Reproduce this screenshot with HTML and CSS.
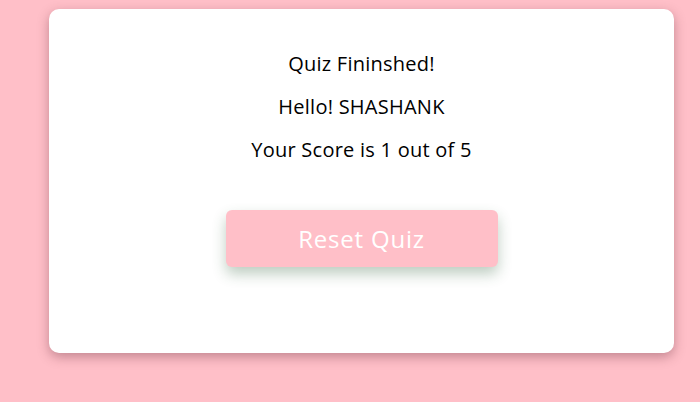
FILE: index.html
```html
<!DOCTYPE html>
<html>
<head>
<meta charset="utf-8">
<link rel="stylesheet" href="styles.css">
</head>
<body>
<div class="card">
  <p class="line">Quiz Fininshed!</p>
  <p class="line">Hello! SHASHANK</p>
  <p class="line">Your Score is 1 out of 5</p>
  <button class="reset">Reset Quiz</button>
</div>
</body>
</html>
```
FILE: styles.css
```css
html, body {
  margin: 0;
  padding: 0;
}
body {
  background: #ffbfc8;
  font-family: "Open Sans", "Noto Sans", sans-serif;
  padding-top: 9px;
  height: 402px;
  box-sizing: border-box;
}
.card {
  margin-left: 49px;
  width: 625px;
  height: 344px;
  background: #fff;
  border-radius: 10px;
  box-shadow: 0 4px 12px rgba(80, 30, 40, 0.35);
  box-sizing: border-box;
  padding-top: 40px;
  display: flex;
  flex-direction: column;
  align-items: center;
}
.line {
  margin: 0 0 13px 0;
  font-size: 20px;
  line-height: 30px;
  letter-spacing: 0.25px;
  color: #000;
}
.reset {
  margin-top: 32px;
  width: 272px;
  height: 57px;
  border: none;
  border-radius: 6px;
  background: #ffbfc8;
  color: #fff;
  font-family: inherit;
  font-size: 24px;
  letter-spacing: 0.8px;
  box-shadow: 0 7px 14px rgba(40, 90, 50, 0.3);
}
```
